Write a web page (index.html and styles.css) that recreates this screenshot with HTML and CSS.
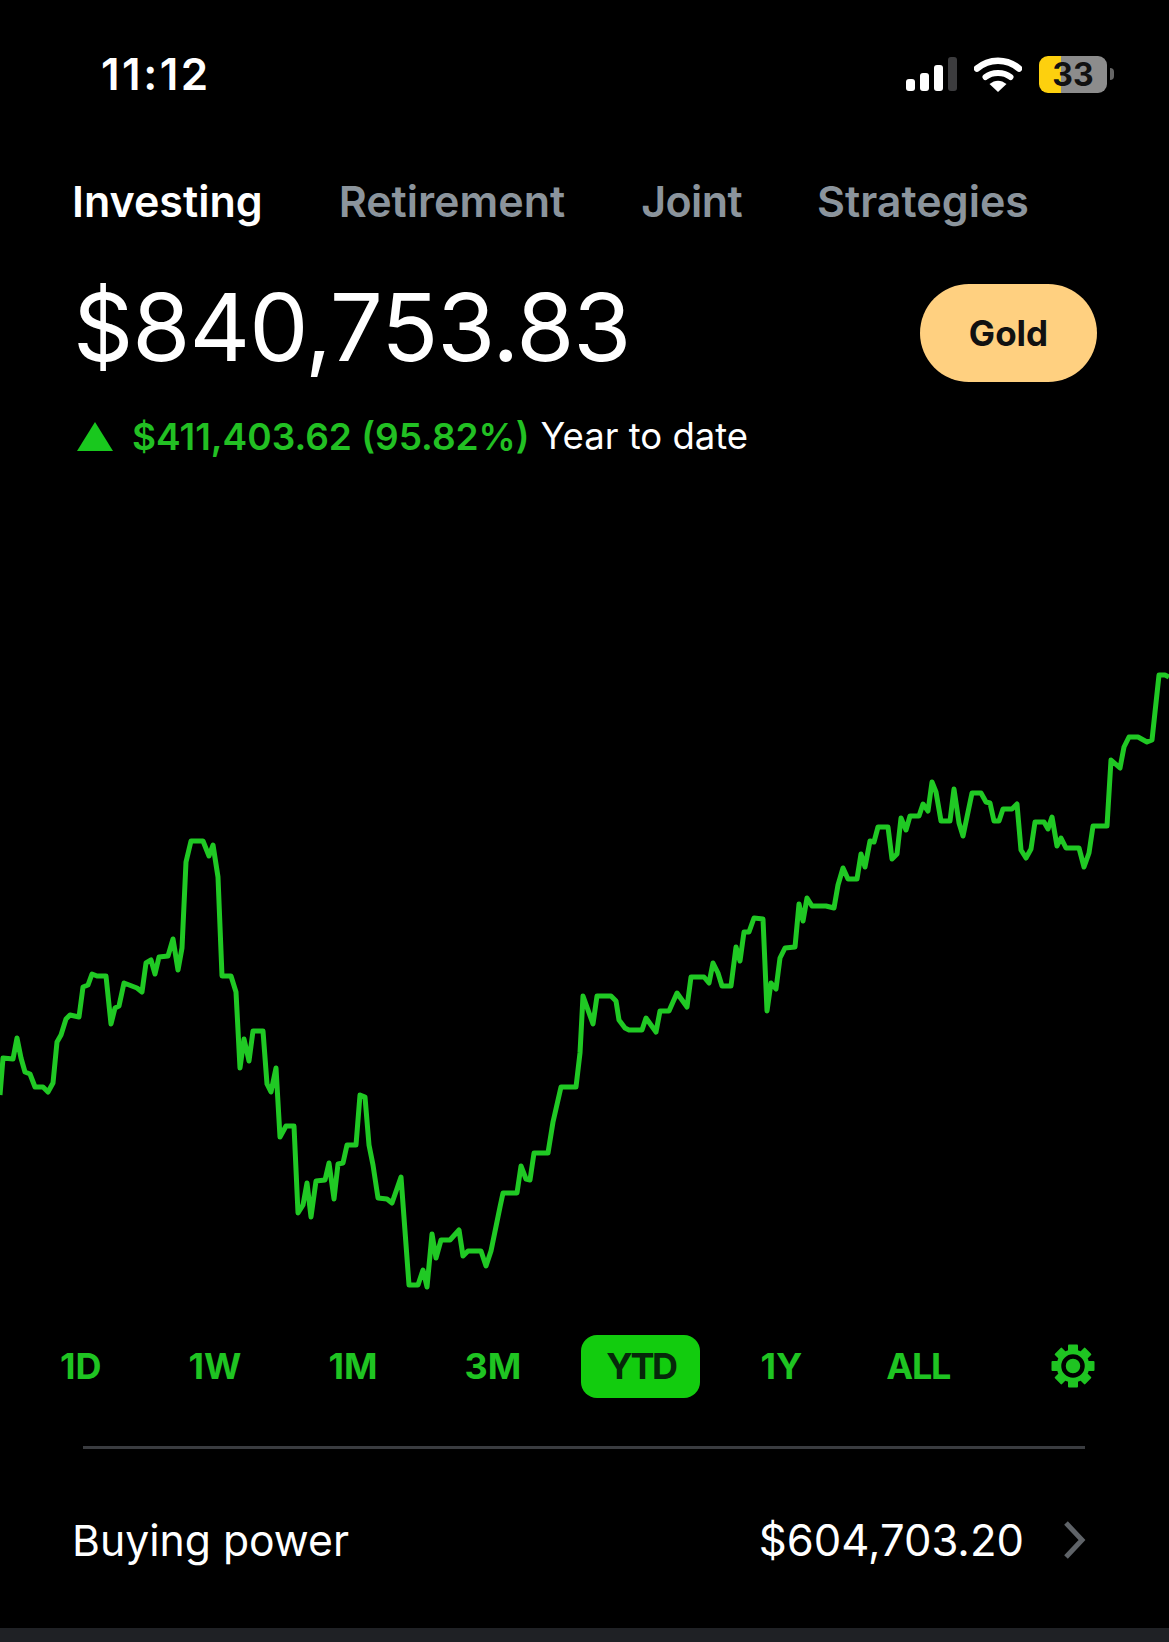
FILE: index.html
```html
<!DOCTYPE html>
<html>

<head>
    <meta charset="utf-8">
    <title>Investing</title>
    <link rel="stylesheet" href="styles.css">
</head>

<body>
    <div class="phone">
        <!-- status bar -->
        <div class="status">
            <div class="time">11:12</div>
            <div class="status-icons">
                <div class="signal">
                    <span class="bar bar1"></span>
                    <span class="bar bar2"></span>
                    <span class="bar bar3"></span>
                    <span class="bar bar4"></span>
                </div>
                <svg class="wifi" viewBox="0 0 48 35">
                    <path d="M3 11.5C15 1 33 1 45 11.5" fill="none" stroke="#fff" stroke-width="6.5" stroke-linecap="round"/>
                    <path d="M11.5 20C18 14.5 30 14.5 36.5 20" fill="none" stroke="#fff" stroke-width="6" stroke-linecap="round"/>
                    <path d="M24 35L15.5 27C21 22.5 27 22.5 32.5 27Z" fill="#fff"/>
                </svg>
                <div class="battery">33</div>
                <div class="battery-cap"></div>
            </div>
        </div>

        <ul class="tabs">
            <li class="current">Investing</li>
            <li>Retirement</li>
            <li>Joint</li>
            <li>Strategies</li>
        </ul>

        <div class="balance">
            <div class="amount">$840,753.83</div>
            <div class="gold">Gold</div>
        </div>

        <div class="change">
            <svg class="up" viewBox="0 0 36 29"><path d="M18 0L36 29H0Z"/></svg>
            <span class="gain">$411,403.62 (95.82%)</span>
            <span class="period">Year to date</span>
        </div>

        <!-- chart -->
        <svg class="chart" viewBox="0 490 1169 830">
            <polyline fill="none" stroke="#20c924" stroke-width="5" stroke-linejoin="round" points="0,1095 3,1058 13,1059 17,1038 21,1058 25,1072 30,1074 35,1087 43,1087 48,1092 53,1083 57,1042 61,1035 66,1019 70,1015 79,1017 83,987 88,985 92,974 97,976 106,976 111,1024 115,1008 119,1006 124,983 137,988 142,992 146,963 151,960 155,974 159,957 168,956 173,939 178,970 182,948 186,862 191,841 203,841 209,856 213,845 218,877 222,976 231,976 236,992 240,1068 244,1039 249,1061 253,1031 263,1031 267,1084 271,1092 276,1068 280,1137 286,1126 294,1126 298,1213 303,1205 307,1183 311,1217 316,1181 325,1180 329,1163 334,1199 338,1164 343,1163 347,1145 356,1145 360,1095 365,1097 369,1145 373,1165 378,1198 387,1199 392,1203 401,1177 409,1285 418,1285 423,1270 427,1287 432,1234 436,1258 441,1240 450,1240 459,1230 463,1256 468,1251 481,1251 486,1266 491,1251 500,1207 503,1193 517,1193 521,1166 526,1179 530,1180 534,1153 548,1153 553,1122 561,1087 576,1087 580,1053 583,996 593,1024 597,996 611,996 616,1001 619,1020 625,1028 629,1030 642,1030 646,1018 656,1032 660,1011 669,1011 677,993 687,1007 691,977 704,977 709,983 713,963 718,973 722,986 731,986 736,947 740,961 744,932 749,932 754,918 763,919 767,1011 771,983 776,989 780,958 785,948 795,947 799,904 803,921 807,898 812,906 826,906 834,908 838,885 843,868 848,879 857,879 861,854 865,867 870,841 874,842 878,827 888,827 892,859 897,854 901,818 906,830 910,816 919,816 923,804 928,811 932,782 936,792 941,821 950,821 954,789 959,823 963,836 972,793 981,793 986,802 990,803 994,821 999,821 1003,809 1012,809 1017,804 1021,850 1026,858 1031,849 1035,822 1044,822 1048,829 1052,817 1057,846 1061,838 1066,848 1079,848 1084,867 1089,853 1093,826 1107,826 1111,760 1120,768 1124,747 1129,737 1138,737 1147,742 1152,740 1159,675 1165,675 1169,677"/>
        </svg>

        <div class="ranges">
            <div class="range">1D</div>
            <div class="range">1W</div>
            <div class="range">1M</div>
            <div class="range">3M</div>
            <div class="range current">YTD</div>
            <div class="range year">1Y</div>
            <div class="range all">ALL</div>
            <svg class="gear" viewBox="-22 -22 44 44">
                <g fill="#1fc422">
                    <rect x="-5" y="-21.5" width="10" height="43" rx="1"/>
                    <rect x="-5" y="-21.5" width="10" height="43" rx="1" transform="rotate(45)"/>
                    <rect x="-5" y="-21.5" width="10" height="43" rx="1" transform="rotate(90)"/>
                    <rect x="-5" y="-21.5" width="10" height="43" rx="1" transform="rotate(135)"/>
                    <circle r="16.5"/>
                </g>
                <circle r="9.5" fill="#1fc422" stroke="#000" stroke-width="4.5"/>
            </svg>
        </div>

        <div class="line"></div>

        <div class="power">
            <div class="power-label">Buying power</div>
            <div class="power-value">$604,703.20</div>
            <svg class="arrow" viewBox="0 0 23 38"><path d="M3 2L19 19L3 36" fill="none" stroke="#5f6368" stroke-width="5"/></svg>
        </div>

        <div class="bottom"></div>
    </div>
</body>

</html>
```

FILE: styles.css
```css
*{
    padding: 0;
    margin: 0;
    box-sizing: border-box;
}
ul{
    list-style: none;
}
html,body{
    width: 100%;
    height: 100%;
    background-color: #000;
}
body{
    font-family: "Inter", "Liberation Sans", sans-serif;
    color: #fff;
    overflow: hidden;
}
.phone{
    width: 1169px;
    height: 1642px;
    display: flex;
    flex-direction: column;
}

/* status bar */
.status{
    height: 148px;
    display: flex;
    justify-content: space-between;
    align-items: center;
    padding: 0 55px 0 101px;
}
.time{
    font-size: 44px;
    font-weight: 600;
    letter-spacing: 2.5px;
}
.status-icons{
    display: flex;
    align-items: center;
}
.signal{
    display: flex;
    align-items: flex-end;
    gap: 5px;
    height: 34px;
}
.bar{
    width: 9px;
    background-color: #fff;
    border-radius: 3px;
}
.bar1{ height: 12px; }
.bar2{ height: 18px; }
.bar3{ height: 26px; }
.bar4{ height: 34px; background-color: #3c3c3e; }
.wifi{
    width: 48px;
    height: 35px;
    margin-left: 17px;
}
.battery{
    width: 68px;
    height: 37px;
    margin-left: 17px;
    border-radius: 9px;
    background: linear-gradient(90deg, #fdd00e 33%, #8c8c8c 33%);
    color: #111;
    font-size: 32px;
    font-weight: 700;
    text-align: center;
    line-height: 37px;
}
.battery-cap{
    width: 4px;
    height: 12px;
    margin-left: 3px;
    background-color: #666;
    border-radius: 0 6px 6px 0;
}

/* tabs */
.tabs{
    height: 106px;
    display: flex;
    align-items: center;
    gap: 75px;
    padding-left: 72px;
    font-size: 43px;
    font-weight: 600;
    color: #8b949c;
}
.tabs li:nth-child(2){
    margin-left: 1px;
    margin-right: 1px;
}
.tabs li:nth-child(3){
    letter-spacing: -0.6px;
}
.tabs li.current{
    color: #fff;
}

/* balance */
.balance{
    height: 128px;
    padding: 30px 72px 0 73px;
    display: flex;
    justify-content: space-between;
    align-items: center;
}
.amount{
    font-size: 94px;
    font-weight: 400;
    letter-spacing: -1px;
    margin-top: -12px;
}
.gold{
    width: 177px;
    height: 98px;
    border-radius: 49px;
    background-color: #ffd080;
    color: #111;
    font-size: 35px;
    font-weight: 700;
    text-align: center;
    line-height: 98px;
}
.change{
    height: 108px;
    padding-left: 77px;
    display: flex;
    align-items: center;
    font-size: 37px;
}
.up{
    width: 36px;
    height: 29px;
    fill: #19c81e;
    margin-right: 19px;
}
.gain{
    color: #22c023;
    font-weight: 600;
    margin-right: 11px;
}
.period{
    font-size: 36.5px;
}

/* chart */
.chart{
    display: block;
    width: 1169px;
    height: 830px;
}

/* range buttons */
.ranges{
    height: 92px;
    display: flex;
    align-items: center;
    gap: 37px;
    padding-left: 35px;
}
.range{
    padding: 0 25px;
    height: 63px;
    line-height: 63px;
    border-radius: 16px;
    color: #1fc422;
    font-size: 36px;
    font-weight: 700;
    letter-spacing: 0;
}
.range.current{
    background-color: #12cc0e;
    color: #06280a;
    letter-spacing: -2.5px;
    margin-left: -2px;
}
.range.year{
    margin-left: -2px;
}
.range.all{
    letter-spacing: -1.2px;
    margin-left: -3px;
}
.gear{
    width: 44px;
    height: 44px;
    margin-left: 39px;
}
.line{
    height: 3px;
    margin: 34px 84px 0 83px;
    background-color: #3a3c40;
}

/* buying power */
.power{
    height: 179px;
    padding: 3px 83px 0 72px;
    display: flex;
    align-items: center;
    font-size: 43px;
}
.power-label{
    flex: 1;
    font-size: 42.7px;
}
.power-value{
    font-size: 43.6px;
}
.arrow{
    width: 23px;
    height: 38px;
    margin-left: 39px;
}
.bottom{
    flex: 1;
    background-color: #1f2125;
}
```
